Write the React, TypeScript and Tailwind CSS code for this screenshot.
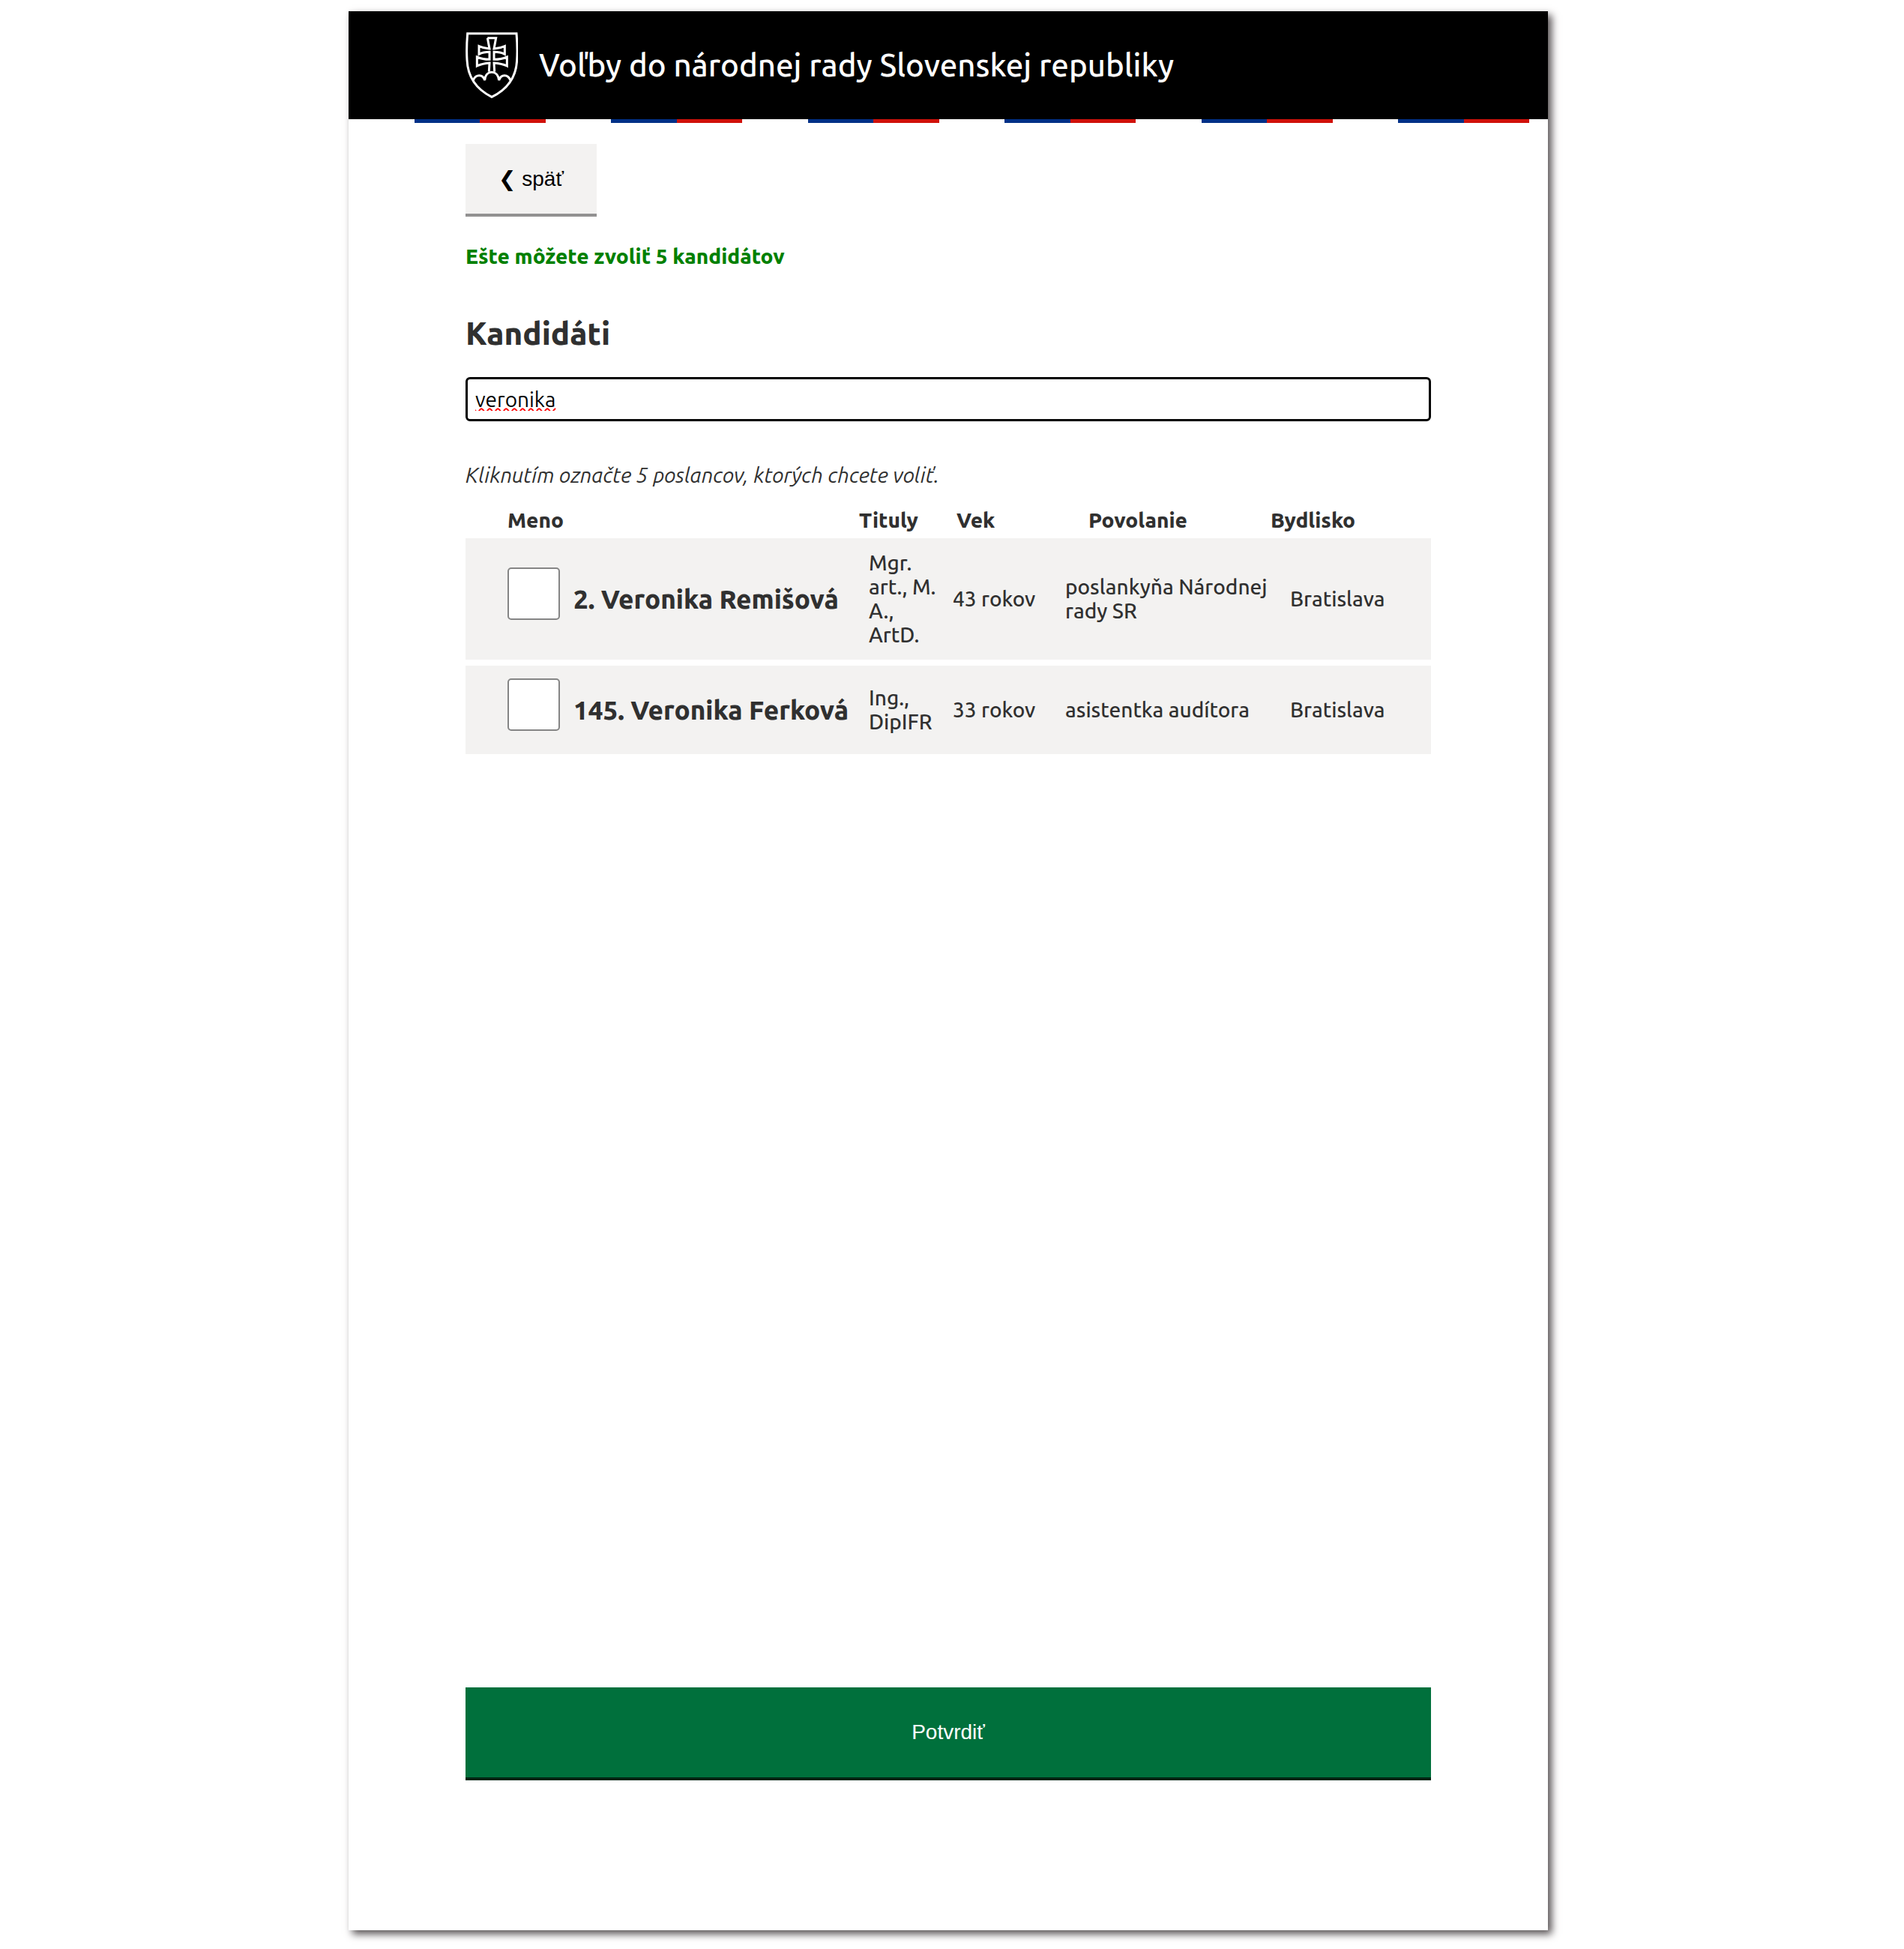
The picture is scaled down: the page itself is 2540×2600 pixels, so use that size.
import type { FC } from 'react';

interface Candidate {
    id: number;
    name: string;
    titles: string;
    age: string;
    job: string;
    city: string;
}

const candidates: Candidate[] = [
    { id: 2, name: 'Veronika Remišová', titles: 'Mgr. art., M. A., ArtD.', age: '43 rokov', job: 'poslankyňa Národnej rady SR', city: 'Bratislava' },
    { id: 145, name: 'Veronika Ferková', titles: 'Ing., DipIFR', age: '33 rokov', job: 'asistentka audítora', city: 'Bratislava' },
];

const CoatOfArms: FC = () => (
    <svg className="w-[70px] h-[88px] shrink-0" viewBox="63 39 210 264" fill="none" stroke="white" strokeWidth="9" role="img" aria-label="Slovenský znak">
        <path d="M71 44H267C270 80 271 120 269 150C266 220 230 268 168 298C108 268 72 220 69 150C67 120 68 80 71 44Z" />
        <path d="M94 232C98 216 111 212 118 212C128 212 136 219 140 231C142 208 155 199 168 199C181 199 194 208 197 231C201 219 210 212 219 212C228 212 238 218 243 232" />
        <path d="M151 62H185L177 105Q200 104 220 95V127Q203 118 177 118V148Q206 148 229 138V174Q208 164 177 162L179 197M157 197L159 162Q130 164 109 174V138Q132 148 159 148V118Q134 118 117 127V95Q137 104 159 105L151 62" />
    </svg>
);

const CandidateRow: FC<{ candidate: Candidate }> = ({ candidate }) => (
    <tr className="bg-[#f3f2f1]">
        <td className="py-[17px] pl-14">
            <label className="flex items-center gap-[18px] text-[35px] leading-10 font-extrabold whitespace-nowrap">
                <input type="checkbox" className="appearance-none size-[70px] mb-[14px] shrink-0 bg-white border-2 border-[#858585] rounded-[5px] checked:bg-[#00703c]" />
                {candidate.id}. {candidate.name}
            </label>
        </td>
        <td className="py-[17px] pl-[13px] pr-2">{candidate.titles}</td>
        <td className="py-[17px] pl-[13px] whitespace-nowrap">{candidate.age}</td>
        <td className="py-[17px] pl-[14px]">{candidate.job}</td>
        <td className="py-[17px] pl-[26px]">{candidate.city}</td>
    </tr>
);

export default function App() {
    return (
        <div className="min-h-screen flex flex-col bg-white pt-[15px] pr-[10px] pb-[25px] font-['Ubuntu','Noto_Sans',sans-serif] font-medium text-[28px] leading-8 text-[#303030]">
            <div className="w-full max-w-[1600px] mx-auto flex-1 flex flex-col bg-white shadow-[5px_5px_10px_#565052]">
                <header className="bg-black text-white px-[156px] py-7 flex items-center gap-7">
                    <CoatOfArms />
                    <p className="text-[42px] leading-[48px]">Voľby do národnej rady Slovenskej republiky</p>
                </header>
                <div className="h-[5px] bg-[repeating-linear-gradient(90deg,#fff_0_88px,#003087_88px_175px,#d0110a_175px_263px,#fff_263px_350px,#003087_350px_438px,#d0110a_438px_525px)]" />

                <main className="flex-1 flex flex-col items-start px-[156px] pt-7 pb-[204px]">
                    <button type="button" className="w-[175px] h-[93px] bg-[#f3f2f1] text-black text-[28px] font-normal font-['Liberation_Sans','DejaVu_Sans',sans-serif] shadow-[0_4px_0_#929191]">
                        ❮ späť
                    </button>

                    <p className="mt-[41px] font-extrabold text-[#008000]">Ešte môžete zvoliť 5 kandidátov</p>

                    <h1 className="mt-[63px] text-[42px] leading-[48px] font-extrabold">
                        <label htmlFor="search">Kandidáti</label>
                    </h1>
                    <input
                        id="search"
                        type="text"
                        defaultValue="veronika"
                        spellCheck={false}
                        className="w-full h-[59px] mt-[34px] px-[10px] border-3 border-black rounded-md font-normal text-black outline-none underline decoration-wavy decoration-[#ff0000] decoration-2"
                    />

                    <p className="mt-[56px] italic font-normal">Kliknutím označte 5 poslancov, ktorých chcete voliť.</p>

                    <table className="w-full mt-[20px] table-fixed border-separate border-spacing-x-0 border-spacing-y-2">
                        <thead>
                            <tr className="text-left">
                                <th className="w-[525px] pl-14 font-extrabold">Meno</th>
                                <th className="w-[112px] font-extrabold">Tituly</th>
                                <th className="w-[149px] pl-[18px] font-extrabold">Vek</th>
                                <th className="w-[288px] pl-[45px] font-extrabold">Povolanie</th>
                                <th className="font-extrabold">Bydlisko</th>
                            </tr>
                        </thead>
                        <tbody>
                            {candidates.map((candidate) => (
                                <CandidateRow key={candidate.id} candidate={candidate} />
                            ))}
                        </tbody>
                    </table>

                    <button type="button" className="w-full h-[120px] mt-auto bg-[#00703c] text-white text-[28px] font-normal font-['Liberation_Sans',sans-serif] shadow-[0_4px_0_#002413]">
                        Potvrdiť
                    </button>
                </main>
            </div>
        </div>
    );
}
